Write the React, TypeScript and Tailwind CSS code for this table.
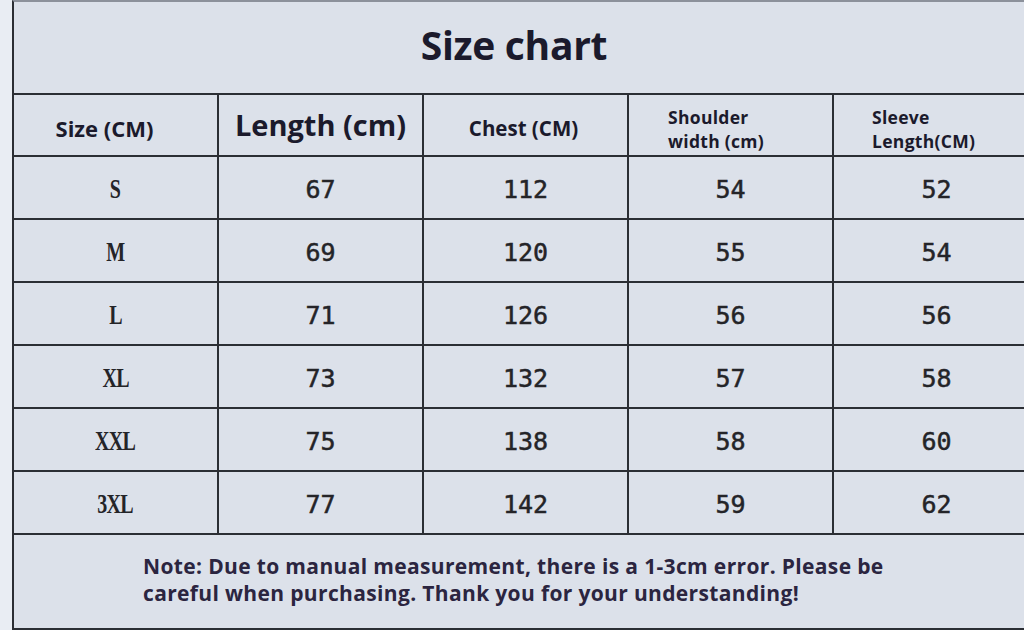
const rows = [
  ["S", "67", "112", "54", "52"],
  ["M", "69", "120", "55", "54"],
  ["L", "71", "126", "56", "56"],
  ["XL", "73", "132", "57", "58"],
  ["XXL", "75", "138", "58", "60"],
  ["3XL", "77", "142", "59", "62"],
];

const sans = { fontFamily: '"Open Sans", "Noto Sans", sans-serif' };

export default function App() {
  return (
    <div className="w-[1024px] h-[630px] overflow-hidden bg-[#e9edf3]">
      <div
        className="ml-[12px] w-[1040px] h-[630px] bg-[#dce1ea] border-t-2 border-t-[#8c919b] border-l-2 border-b-2 border-[#2b2e34] text-[#1b1a2c]"
        style={sans}
      >
        {/* title */}
        <div className="h-[93px] border-b-2 border-[#2b2e34] flex items-center">
          <div className="w-[1000px] text-center text-[39px] font-bold tracking-[-0.3px] pb-[5px]">
            Size chart
          </div>
        </div>

        {/* header */}
        <div className="flex h-[62px] border-b-2 border-[#2b2e34]">
          <div className="w-[205px] border-r-2 border-[#2b2e34] flex items-center justify-center text-[22px] font-bold pt-[6px] pr-[22px]">
            Size (CM)
          </div>
          <div className="w-[205px] border-r-2 border-[#2b2e34] flex items-center justify-center text-[29px] font-bold">
            Length (cm)
          </div>
          <div className="w-[205px] border-r-2 border-[#2b2e34] flex items-center justify-center text-[20.5px] font-bold pt-[6px] pr-[4px]">
            Chest (CM)
          </div>
          <div className="w-[205px] border-r-2 border-[#2b2e34] flex flex-col justify-center pl-[39px] pt-[8px] text-[17.5px] font-bold leading-[24px] tracking-[0.3px]">
            <span>Shoulder</span>
            <span>width (cm)</span>
          </div>
          <div className="flex-1 flex flex-col justify-center pl-[38px] pt-[8px] text-[17.5px] font-bold leading-[24px] tracking-[0.3px]">
            <span>Sleeve</span>
            <span>Length(CM)</span>
          </div>
        </div>

        {/* rows */}
        {rows.map((r) => (
          <div key={r[0]} className="flex h-[63px] border-b-2 border-[#2b2e34] text-[#242428]">
            <div
              className="w-[205px] border-r-2 border-[#2b2e34] flex items-center justify-center text-[27px] font-bold pt-[3px]"
              style={{ fontFamily: '"Liberation Serif", serif' }}
            >
              <span className="inline-block scale-x-[0.74] tracking-[-1px]">{r[0]}</span>
            </div>
            {r.slice(1).map((v, i) => (
              <div
                key={i}
                className={
                  i < 3
                    ? "w-[205px] border-r-2 border-[#2b2e34] flex items-center justify-center text-[25px] pt-[4px]"
                    : "w-[205px] flex items-center justify-center text-[25px] pt-[4px]"
                }
                style={{ fontFamily: '"DejaVu Sans Mono", monospace', WebkitTextStroke: "0.5px #242428" }}
              >
                {v}
              </div>
            ))}
          </div>
        ))}

        {/* note */}
        <div className="h-[93px] pl-[129px] pt-[18px] text-[21px] font-bold leading-[27px] tracking-[0.35px] text-[#2b2540]">
          Note: Due to manual measurement, there is a 1-3cm error. Please be
          <br />
          careful when purchasing. Thank you for your understanding!
        </div>
      </div>
    </div>
  );
}
